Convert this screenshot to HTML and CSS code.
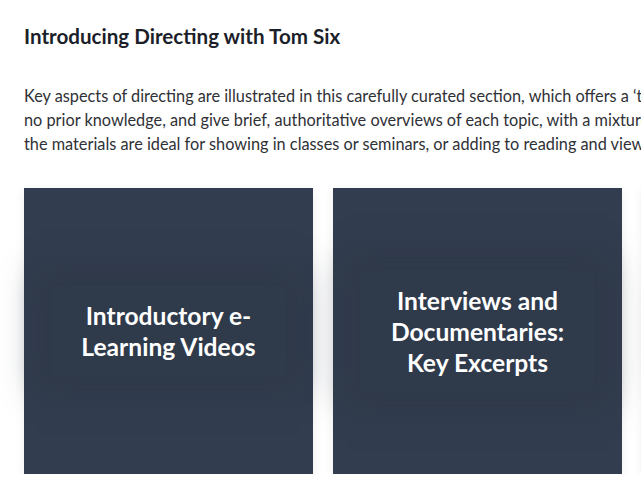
FILE: index.html
```html
<!DOCTYPE html>
<html lang="en">
<head>
<meta charset="utf-8">
<title>Introducing Directing with Tom Six</title>
<link rel="stylesheet" href="styles.css">
</head>
<body>
<main class="page">
  <h1 class="title">Introducing Directing with Tom Six</h1>
  <p class="intro">
    <span class="line">Key aspects of directing are illustrated in this carefully curated section, which offers a ‘taster’ of the collection. The videos assume</span>
    <span class="line">no prior knowledge, and give brief, authoritative overviews of each topic, with a mixture of practical demonstrations and interviews;</span>
    <span class="line">the materials are ideal for showing in classes or seminars, or adding to reading and viewing lists.</span>
  </p>
  <div class="cards">
    <a class="card" href="#"><span class="label">Introductory e-<br>Learning Videos</span></a>
    <a class="card" href="#"><span class="label">Interviews and<br>Documentaries:<br>Key Excerpts</span></a>
    <a class="card" href="#"><span class="label">Masterclasses</span></a>
  </div>
</main>
</body>
</html>
```

FILE: styles.css
```css
html, body {
  margin: 0;
  padding: 0;
  background: #ffffff;
  overflow: hidden;
}
.page {
  padding: 22px 24px 0 24px;
  width: 1200px;
}
.title {
  margin: 0;
  font-family: "Lato", "Noto Sans", sans-serif;
  font-weight: 700;
  font-size: 20.6px;
  line-height: 28px;
  color: #1c1f2a;
}
.intro {
  margin: 34px 0 0 0;
  font-family: "Lato", "Noto Sans", sans-serif;
  font-size: 16.3px;
  line-height: 24px;
  color: #2f3136;
}
.line {
  display: block;
  white-space: nowrap;
}
.cards {
  display: flex;
  gap: 20px;
  margin-top: 32px;
}
.card {
  flex: 0 0 289px;
  height: 286px;
  background: #323d4f;
  display: flex;
  align-items: center;
  justify-content: center;
  text-decoration: none;
  box-shadow: 0 2px 10px rgba(0, 0, 0, 0.07);
}
.label {
  display: block;
  padding: 14px 30px;
  text-align: center;
  font-family: "Lato", "Noto Sans", sans-serif;
  font-weight: 700;
  font-size: 24.6px;
  line-height: 31px;
  color: #ffffff;
  background: #2f3a4b;
  box-shadow: 0 0 30px 14px rgba(44, 53, 68, 0.55);
}
```
